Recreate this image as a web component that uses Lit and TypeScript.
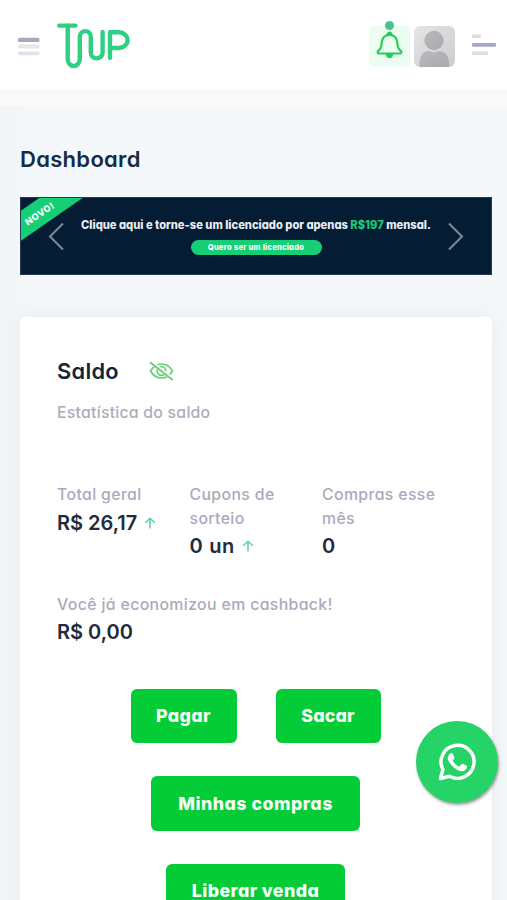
import { LitElement, html, css, svg } from "lit";
import { customElement } from "lit/decorators.js";

const arrowUp = html`<svg class="up" viewBox="0 0 12 14" width="12" height="14">
  <path d="M6 12.500V2.500M1.200 6.800L6 2.300l4.800 4.500" fill="none" stroke="#5bd3a0" stroke-width="1.500" />
</svg>`;

const chevron = (d: string) => svg`<path d=${d} fill="none" stroke="#7c8896" stroke-width="2.1" />`;

@customElement("top-bar")
class TopBar extends LitElement {
  static styles = css`
    :host { display: block; background: #fafafb; height: 106px; }
    .bar {
      height: 89px; background: #fff; box-sizing: border-box;
      display: flex; align-items: flex-start; padding: 0 11px 0 18px;
    }
    .menu { margin-top: 36px; flex: none; }
    .logo { margin: 20px 0 0 17px; flex: none; }
    .spacer { flex: 1; }
    .bell { margin: 20px 4px 0 0; flex: none; }
    .avatar { margin-top: 26px; flex: none; }
    .aside { margin: 33px 0 0 17px; flex: none; }
  `;
  render() {
    return html`<header class="bar">
      <svg class="menu" width="22" height="21" viewBox="0 0 22 21">
        <rect x="0" y="1.800" width="21.500" height="4.200" rx="1.600" fill="#a9a7bb" />
        <rect x="0" y="8.600" width="21.500" height="3.800" rx="1.600" fill="#e6e5ed" />
        <rect x="0" y="15.400" width="21.500" height="3.800" rx="1.600" fill="#e2e1ea" />
      </svg>
      <svg class="logo" width="76" height="50" viewBox="0 0 76 50">
        <g fill="none" stroke="#2fd084" stroke-width="4.400" stroke-linecap="round" stroke-linejoin="round">
          <path d="M2.200 5.600H18.400" />
          <path d="M10.700 5.800V39A6.050 7 0 0 0 22.800 39V17A5.500 5.900 0 0 1 33.800 17V32.500A5.900 5.900 0 0 0 45.600 32.500V12" />
          <path d="M53 37.800V12.300H62.500A9.200 7.900 0 0 1 62.500 28H53.500" />
        </g>
      </svg>
      <span class="spacer"></span>
      <svg class="bell" width="41" height="47" viewBox="0 0 41 47">
        <rect x="0" y="5.500" width="41" height="41" rx="5" fill="#ebfdf0" />
        <circle cx="20.500" cy="5.500" r="4.500" fill="#48c38b" />
        <path d="M20.500 15C14.800 15 12.800 19 12.600 23.500C12.400 28 11.200 29.500 9.300 30.800C8 32 8.700 33.500 10.200 33.500H30.800C32.300 33.500 33 32 31.700 30.800C29.800 29.500 28.600 28 28.400 23.500C28.200 19 26.200 15 20.500 15Z" fill="none" stroke="#24cc58" stroke-width="2.200" />
        <path d="M20.500 11.500Q17.600 11.500 17.500 15.500H23.500Q23.400 11.500 20.500 11.500ZM16.800 34H24.200Q23.700 38.300 20.500 38.300Q17.300 38.300 16.800 34Z" fill="#24cc58" />
      </svg>
      <svg class="avatar" width="41" height="41" viewBox="0 0 41 41">
        <defs>
          <linearGradient id="bg" x1="0" y1="0" x2="1" y2="1"><stop offset="0" stop-color="#e5e5e6" /><stop offset="1" stop-color="#cbcccd" /></linearGradient>
          <linearGradient id="fg" x1="0" y1="0" x2="1" y2="1"><stop offset="0" stop-color="#b9babd" /><stop offset="1" stop-color="#a7a9ac" /></linearGradient>
        </defs>
        <rect width="41" height="41" rx="6" fill="url(#bg)" />
        <circle cx="20" cy="14.500" r="9.700" fill="url(#fg)" />
        <path d="M5.500 41V37Q6 25.500 14 25L20 26.500L26 25Q34.500 25.500 35 37V41Z" fill="url(#fg)" />
      </svg>
      <svg class="aside" width="24" height="24" viewBox="0 0 24 24">
        <rect x="0" y="1.500" width="9" height="3.500" rx="1" fill="#dddde4" />
        <rect x="0" y="10" width="24" height="3.800" rx="1" fill="#a5a9c4" />
        <rect x="0" y="18.500" width="16" height="3.500" rx="1" fill="#dddde4" />
      </svg>
    </header>`;
  }
}

@customElement("promo-banner")
class PromoBanner extends LitElement {
  static styles = css`
    :host { display: block; }
    .banner {
      height: 78px; background: #051c35; position: relative; overflow: hidden;
      display: flex; flex-direction: column; align-items: center; box-sizing: border-box; padding-top: 18px;
      color: #fff; border: 1px solid #263b51; margin: 0;
    }
    .line { font: 800 11.200px/18px Inter, sans-serif; letter-spacing: -0.020px; white-space: nowrap; font-feature-settings: "cv11"; color: #e9edf2; }
    .price { color: #1dca77; }
    .cta {
      margin-top: 6px; height: 15px; width: 131px; border-radius: 8px; background: #14cf76;
      text-align: center; font: 800 7.600px/15px Inter, sans-serif; letter-spacing: 0.220px; white-space: nowrap; font-feature-settings: "cv11";
    }
    .ribbon { position: absolute; left: -1px; top: -1px; }
    .prev { position: absolute; left: 26px; top: 23px; }
    .next { position: absolute; right: 26px; top: 23px; }
    .tag { font: 800 9.200px Inter, sans-serif; letter-spacing: 0.500px; }
  `;
  render() {
    return html`<section class="banner">
      <svg class="ribbon" width="66" height="48" viewBox="0 0 66 48">
        <path d="M0 14.500L20.500 0H64L0 44.500Z" fill="#14cf76" />
        <text class="tag" x="0" y="0" fill="#fff" text-anchor="middle" transform="translate(21.500 19.500) rotate(-34)">NOVO!</text>
      </svg>
      <svg class="prev" width="18" height="32" viewBox="0 0 18 32">${chevron("M16 2.500L3 15.500L16 28.500")}</svg>
      <div class="line">Clique aqui e torne-se um licenciado por apenas <span class="price">R$197</span> mensal.</div>
      <div class="cta">Quero ser um licenciado</div>
      <svg class="next" width="18" height="32" viewBox="0 0 18 32">${chevron("M2 2.500L15 15.500L2 28.500")}</svg>
    </section>`;
  }
}

@customElement("balance-card")
class BalanceCard extends LitElement {
  static styles = css`
    :host { display: block; font-family: Inter, sans-serif; font-feature-settings: "cv11"; }
    .card {
      background: #fff; border-radius: 5px; height: 640px; box-sizing: border-box; padding: 39px 37px 0;
      box-shadow: 0 0 20px rgba(70, 80, 90, 0.075);
    }
    .head { display: flex; align-items: center; height: 30px; }
    .title { font-size: 21.800px; line-height: 30px; font-weight: 600; color: #142438; letter-spacing: 0.300px; width: 92px; white-space: nowrap; }
    .sub { margin-top: 15px; font-size: 15.800px; line-height: 24px; color: #abacbe; font-weight: 500; letter-spacing: 0.250px; }
    .stats { display: grid; grid-template-columns: 132.500px 132.500px 1fr; margin-top: 58px; height: 76px; }
    .label { font-size: 15.800px; line-height: 24px; color: #a9aabd; font-weight: 500; white-space: nowrap; letter-spacing: 0.380px; }
    .value { font-size: 20px; line-height: 30px; color: #202b3c; font-weight: 600; display: flex; align-items: center; white-space: nowrap; }
    .first { margin-top: 1px; }
    .units { letter-spacing: 0.700px; }
    .up { margin-left: 7px; }
    .saved { margin-top: 34px; }
    .actions { display: flex; flex-direction: column; gap: 33px; margin-top: 42px; }
    .row { display: flex; justify-content: center; gap: 39px; margin-left: -1px; }
    .btn {
      height: 54.400px; box-sizing: border-box; border: 0; border-radius: 6px; background: #04cc37; color: #f4fff6;
      font: 800 17.800px/54px Inter, sans-serif; font-feature-settings: "cv11"; padding: 0; white-space: nowrap; text-align: center;
    }
    .pay { width: 106px; letter-spacing: 0.400px; }
    .draw { width: 105px; letter-spacing: 0.200px; }
    .buys { width: 209px; letter-spacing: 0.500px; }
    .sell { width: 179px; letter-spacing: 0.400px; }
  `;
  render() {
    return html`<section class="card">
      <div class="head">
        <span class="title">Saldo</span>
        <svg width="25" height="20" viewBox="0 0 25 20">
          <g fill="none" stroke="#65d079" stroke-width="1.700">
            <path d="M1.500 10Q5.500 3 12.500 3T23.500 10Q19.500 17 12.500 17T1.500 10Z" />
            <circle cx="12.500" cy="10" r="4.300" />
            <path d="M1.700 0.800L24 18.300" stroke="#fff" stroke-width="3.600" />
            <path d="M1 1.200L23.800 19" stroke-width="1.900" />
          </g>
        </svg>
      </div>
      <div class="sub">Estatística do saldo</div>
      <div class="stats">
        <div><div class="label">Total geral</div><div class="value first">R$ 26,17 ${arrowUp}</div></div>
        <div><div class="label">Cupons de<br />sorteio</div><div class="value units">0 un ${arrowUp}</div></div>
        <div><div class="label">Compras esse<br />mês</div><div class="value">0</div></div>
      </div>
      <div class="saved"><div class="label">Você já economizou em cashback!</div><div class="value">R$ 0,00</div></div>
      <div class="actions">
        <div class="row">
          <button class="btn pay">Pagar</button>
          <button class="btn draw">Sacar</button>
        </div>
        <div class="row"><button class="btn buys">Minhas compras</button></div>
        <div class="row"><button class="btn sell">Liberar venda</button></div>
      </div>
    </section>`;
  }
}

@customElement("app-root")
class AppRoot extends LitElement {
  static styles = css`
    :host { display: block; height: 900px; overflow: hidden; position: relative; background: linear-gradient(90deg, #f2f4f7 0, #f4f8fa 30px); }
    .page { padding: 0 15px 0 20px; }
    h1 { margin: 38px 0 23px; font: 600 22px/30px Inter, sans-serif; font-feature-settings: "cv11"; letter-spacing: 0.300px; color: #142c45; }
    balance-card { margin-top: 42px; }
    .chat {
      position: absolute; left: 416px; top: 721px; width: 82px; height: 82px; border-radius: 50%;
      background: #26d367; box-shadow: 1px 2px 3px rgba(60, 60, 60, 0.500);
      display: flex; align-items: center; justify-content: center;
    }
  `;
  render() {
    return html`
      <top-bar></top-bar>
      <main class="page">
        <h1>Dashboard</h1>
        <promo-banner></promo-banner>
        <balance-card></balance-card>
      </main>
      <div class="chat">
        <svg width="38" height="38" viewBox="0 0 38 38">
          <path d="M2.400 35.500L5 26.600A16.500 16.500 0 1 1 11.500 33.200Z" fill="none" stroke="#fff" stroke-width="3.500" stroke-linejoin="round" />
          <path d="M12.600 10.200Q14.200 9.600 14.900 11L16.300 14.300Q16.700 15.300 15.200 17Q14.600 17.700 15.200 18.500Q17.400 22 20.800 23.400Q21.500 23.600 22 23L23.500 21.200Q24.100 20.600 25 21L28.300 22.600Q29.200 23.100 29 24.100Q28.400 27.500 24.600 28.200Q21.500 28.600 16.500 25Q11.500 21 9.800 16.300Q9 12.500 12.600 10.200Z" fill="#fff" />
        </svg>
      </div>`;
  }
}
